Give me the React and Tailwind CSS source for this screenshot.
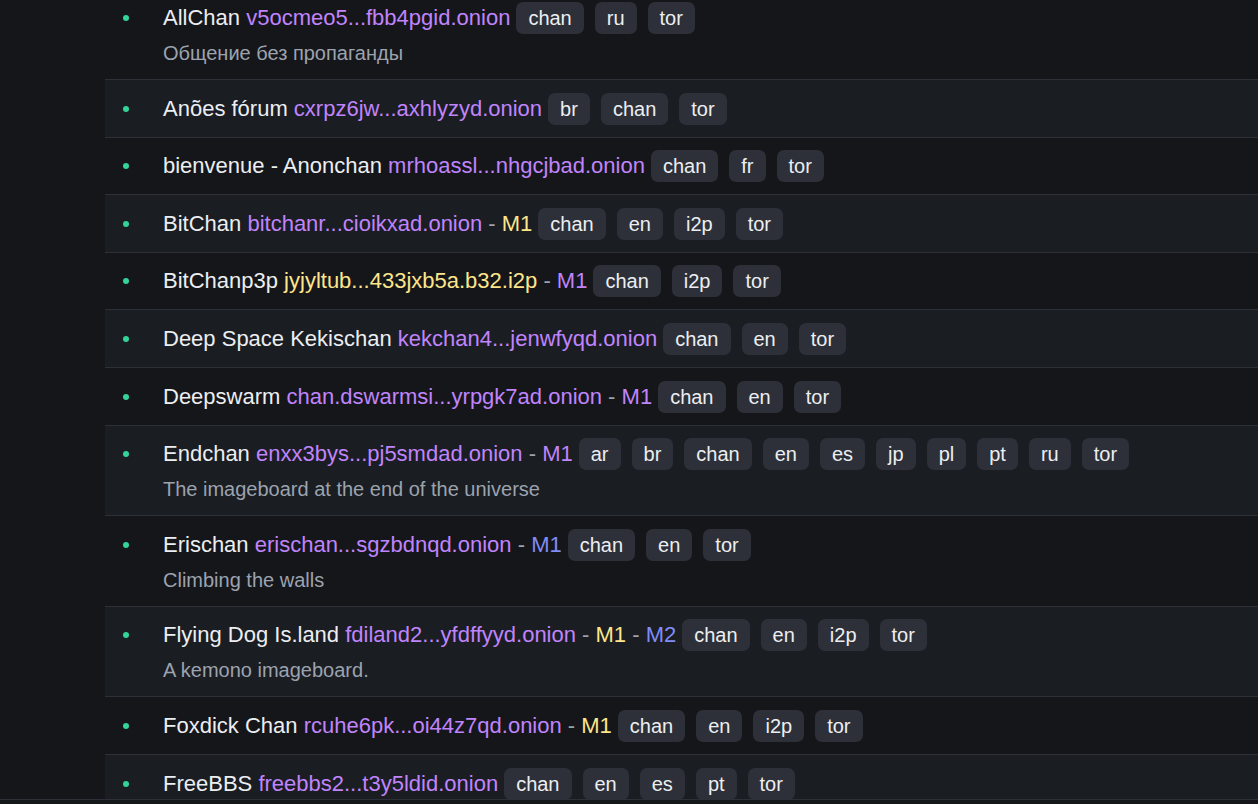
import React from 'react';

const C = {
  purple: 'text-[#c084fc]',
  yellow: 'text-[#fde68a]',
  blue: 'text-[#818cf8]',
};

const sites = [
  { name: 'AllChan', addr: 'v5ocmeo5...fbb4pgid.onion', tags: ['chan', 'ru', 'tor'], desc: 'Общение без пропаганды' },
  { name: 'Anões fórum', addr: 'cxrpz6jw...axhlyzyd.onion', tags: ['br', 'chan', 'tor'] },
  { name: 'bienvenue - Anonchan', addr: 'mrhoassl...nhgcjbad.onion', tags: ['chan', 'fr', 'tor'] },
  { name: 'BitChan', addr: 'bitchanr...cioikxad.onion', mirrors: [['M1', 'yellow']], tags: ['chan', 'en', 'i2p', 'tor'] },
  { name: 'BitChanp3p', addr: 'jyjyltub...433jxb5a.b32.i2p', addrColor: 'yellow', mirrors: [['M1', 'purple']], tags: ['chan', 'i2p', 'tor'] },
  { name: 'Deep Space Kekischan', addr: 'kekchan4...jenwfyqd.onion', tags: ['chan', 'en', 'tor'] },
  { name: 'Deepswarm', addr: 'chan.dswarmsi...yrpgk7ad.onion', mirrors: [['M1', 'purple']], tags: ['chan', 'en', 'tor'] },
  { name: 'Endchan', addr: 'enxx3bys...pj5smdad.onion', mirrors: [['M1', 'purple']], tags: ['ar', 'br', 'chan', 'en', 'es', 'jp', 'pl', 'pt', 'ru', 'tor'], desc: 'The imageboard at the end of the universe' },
  { name: 'Erischan', addr: 'erischan...sgzbdnqd.onion', mirrors: [['M1', 'blue']], tags: ['chan', 'en', 'tor'], desc: 'Climbing the walls' },
  { name: 'Flying Dog Is.land', addr: 'fdiland2...yfdffyyd.onion', mirrors: [['M1', 'yellow'], ['M2', 'blue']], tags: ['chan', 'en', 'i2p', 'tor'], desc: 'A kemono imageboard.' },
  { name: 'Foxdick Chan', addr: 'rcuhe6pk...oi44z7qd.onion', mirrors: [['M1', 'yellow']], tags: ['chan', 'en', 'i2p', 'tor'] },
  { name: 'FreeBBS', addr: 'freebbs2...t3y5ldid.onion', tags: ['chan', 'en', 'es', 'pt', 'tor'] },
];

const Row = ({ site, odd }) => (
  <li className={`flex border-t border-[#2d3039] pl-[18px] pt-[12.6px] pb-[12px] ${odd ? 'bg-[#1a1d22]' : 'bg-[#15161a]'}`}>
    <div className="h-[32px] flex items-center w-[6px] shrink-0">
      <span className="w-[6px] h-[6px] rounded-full bg-[#34d399]" />
    </div>
    <div className="ml-[34px] flex flex-col">
      <div className="flex items-center h-[32px]">
        <span className="text-[22px] leading-[32px] text-[#eceef1] whitespace-pre">
          {site.name}{' '}
          <a className={C[site.addrColor || 'purple']}>{site.addr}</a>
          {(site.mirrors || []).map(([m, col]) => (
            <React.Fragment key={m}>
              <span className="text-[#9ca3af]"> - </span>
              <a className={C[col]}>{m}</a>
            </React.Fragment>
          ))}
        </span>
        <div className="ml-[6px] flex gap-[11px]">
          {site.tags.map((t) => (
            <span key={t} className="h-[32px] px-[12px] flex items-center rounded-[7px] bg-[#2d3039] text-[20px] text-[#eceef1]">
              {t}
            </span>
          ))}
        </div>
      </div>
      {site.desc && (
        <p className="mt-[5px] text-[20px] leading-[28px] text-[#9ca3af]">{site.desc}</p>
      )}
    </div>
  </li>
);

export default function App() {
  return (
    <div className="h-screen w-full bg-[#15161a] overflow-hidden flex flex-col" style={{ fontFamily: '"Liberation Sans", Arial, sans-serif' }}>
      <div className="h-[799px] overflow-hidden shrink-0">
        <ul className="ml-[105px] -mt-[11.6px]">
          {sites.map((s, i) => (
            <Row key={s.name} site={s} odd={i % 2 === 1} />
          ))}
        </ul>
      </div>
      <div className="border-t border-[#2d3039] flex-1" />
    </div>
  );
}
